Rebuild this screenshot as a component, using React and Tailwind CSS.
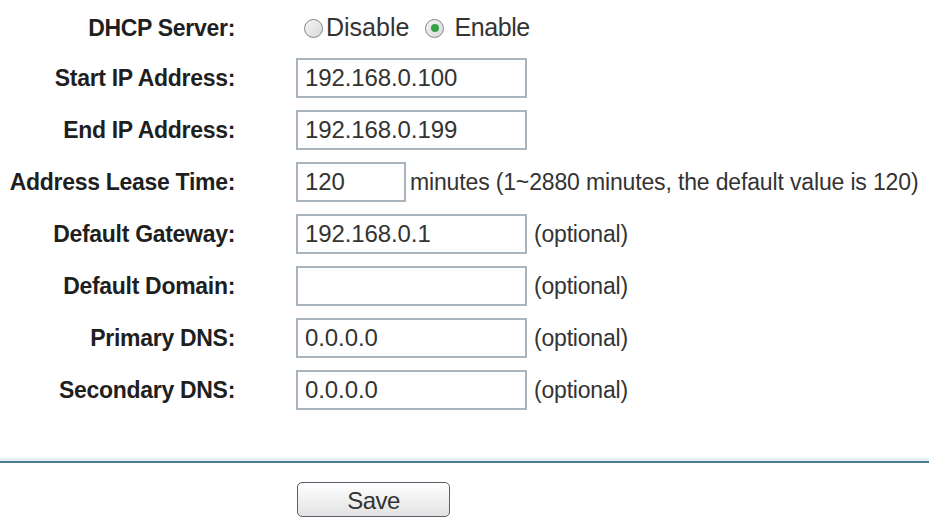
const FONT = "font-['Liberation_Sans',Arial,sans-serif]"

const ROWS = [
  { label: 'Start IP Address:', value: '192.168.0.100' },
  { label: 'End IP Address:', value: '192.168.0.199' },
  { label: 'Address Lease Time:', value: '120', short: true, note: 'minutes (1~2880 minutes, the default value is 120)' },
  { label: 'Default Gateway:', value: '192.168.0.1', note: '(optional)' },
  { label: 'Default Domain:', value: '', note: '(optional)' },
  { label: 'Primary DNS:', value: '0.0.0.0', note: '(optional)' },
  { label: 'Secondary DNS:', value: '0.0.0.0', note: '(optional)' },
]

function Label({ children }) {
  return (
    <div className="w-[235px] shrink-0 text-right text-[23px] font-bold tracking-[-0.3px] text-[#1f1f1f]">
      {children}
    </div>
  )
}

function Radio({ checked }) {
  return (
    <span className="flex h-[19px] w-[19px] items-center justify-center rounded-full border-[1.5px] border-[#7f8891] bg-gradient-to-br from-[#f6f6f6] to-[#d8d8d8]">
      {checked && <span className="h-[8px] w-[8px] rounded-full bg-[#35a046]" />}
    </span>
  )
}

function Field({ row }) {
  return (
    <div className="flex h-[52px] items-center">
      <Label>{row.label}</Label>
      <div className="ml-[61px] flex items-center">
        <div
          className={`flex h-[40px] items-center border-2 border-[#a9b4bf] bg-white pl-[7px] text-[24px] tracking-[-0.1px] text-[#333] ${row.short ? 'w-[110px]' : 'w-[231px]'}`}
        >
          {row.value}
        </div>
        {row.note && (
          <span
            className={`text-[23px] text-[#333] ${row.short ? 'ml-[4px] tracking-[-0.15px]' : 'ml-[7px] tracking-[-0.2px]'}`}
          >
            {row.note}
          </span>
        )}
      </div>
    </div>
  )
}

export default function App() {
  return (
    <div className={`h-[521px] w-[929px] overflow-hidden bg-white ${FONT}`}>
      <div className="pt-[4px]">
        {/* DHCP server toggle */}
        <div className="flex h-[48px] items-center">
          <Label>DHCP Server:</Label>
          <div className="ml-[69px] flex items-center text-[25px] text-[#333]">
            <Radio />
            <span className="ml-[3px]">Disable</span>
            <span className="ml-[16px]"><Radio checked /></span>
            <span className="ml-[10px] tracking-[-0.4px]">Enable</span>
          </div>
        </div>

        {ROWS.map((row) => (
          <Field key={row.label} row={row} />
        ))}
      </div>

      {/* Divider */}
      <div className="mt-[42px] h-[3px] bg-[#e2f0f6]" />
      <div className="h-[2px] bg-[#4a7b92]" />

      <div className="mt-[19px] pl-[297px]">
        <button
          type="button"
          className="h-[35px] w-[153px] rounded-[5px] border border-[#56606a] bg-gradient-to-b from-white to-[#e2e2e2] text-[24px] tracking-[-0.5px] text-[#333]"
        >
          Save
        </button>
      </div>
    </div>
  )
}
